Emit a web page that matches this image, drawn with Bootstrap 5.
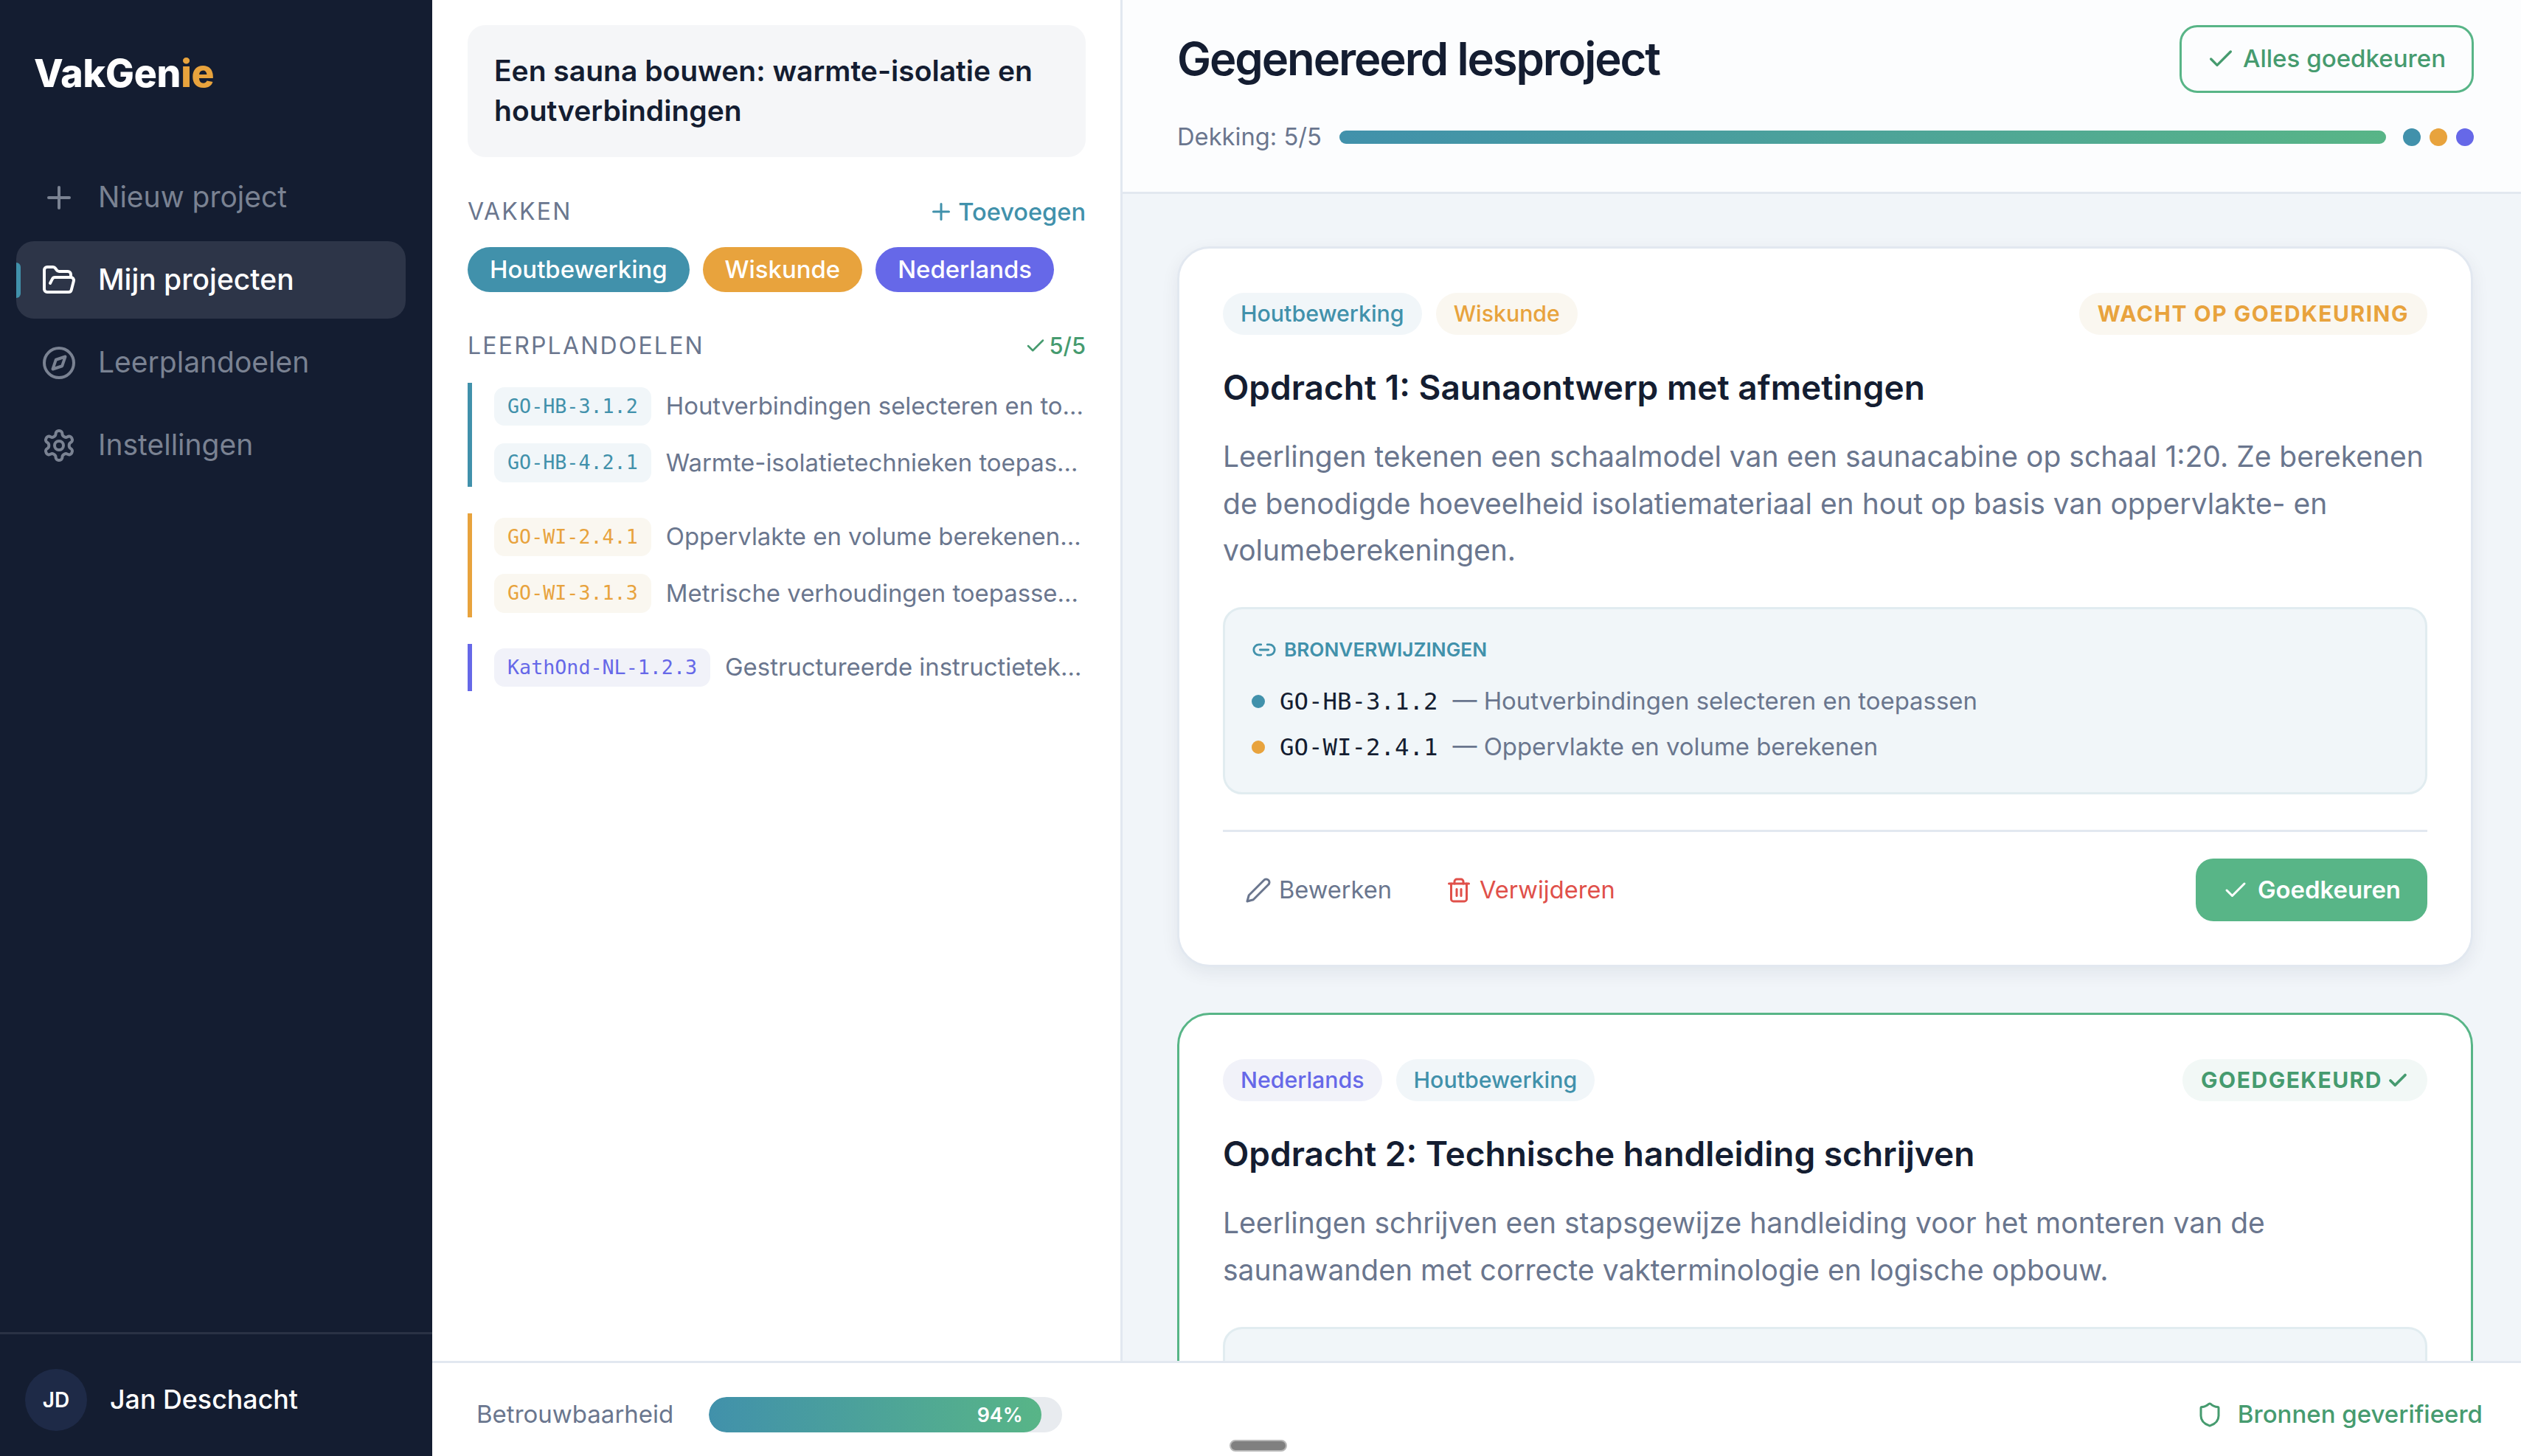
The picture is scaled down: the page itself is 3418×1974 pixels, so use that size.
<!DOCTYPE html>
<html lang="nl">
<head>
    <meta charset="UTF-8">
    <meta name="viewport" content="width=device-width, initial-scale=1.0">
    <title>VakGenie - Gegenereerd lesproject</title>
    <link href="https://cdn.jsdelivr.net/npm/bootstrap@5.3.0/dist/css/bootstrap.min.css" rel="stylesheet">
    <script src="https://cdn.jsdelivr.net/npm/bootstrap@5.3.0/dist/js/bootstrap.bundle.min.js"></script>
    <style>
        :root {
            --vg-ink: #141d31;
            --vg-muted: #6a768e;
            --vg-line: #e2e8f0;
            --vg-teal: #4191ab;
            --vg-orange: #e8a33d;
            --vg-purple: #6668e8;
            --vg-green: #58b587;
            --vg-green-dark: #469b6f;
            --vg-teal-soft: #f1f6f9;
            --vg-orange-soft: #faf7f0;
            --vg-purple-soft: #f1f2f9;
            --vg-green-soft: #f2f8f6;
        }
        body { font-family: "Inter", "Liberation Sans", sans-serif; color: var(--vg-ink); background: #fff; }
        .vg-mono { font-family: "DejaVu Sans Mono", monospace; }
        .vg-ico { fill: none; stroke: currentColor; stroke-width: 2; stroke-linecap: round; stroke-linejoin: round; flex-shrink: 0; }
        .vg-ico-bold { stroke-width: 3; }

        /* sidebar */
        .vg-side { width: 586px; background: #141d31; flex-shrink: 0; }
        .vg-logo { font-size: 51.7px; font-weight: 800; letter-spacing: -.2px; line-height: 62px; color: #fff; padding: 68px 0 0 46px; }
        .vg-logo span { color: var(--vg-orange); }
        .vg-menu { margin-top: 85px; padding: 0 36px 0 22px; gap: 7px; }
        .vg-menu a { height: 105px; padding: 0 0 0 34px; gap: 29px; font-size: 39px; font-weight: 400; color: #7a8292; border-radius: 24px; }
        .vg-menu a.active { background: #2d3548; color: #fff; font-weight: 500; }
        .vg-menu a.active::before { content: ""; position: absolute; left: 0; top: 29px; width: 6px; height: 48px; background: var(--vg-teal); border-radius: 0 6px 6px 0; }
        .vg-user { height: 168px; border-top: 3px solid #2a3245; padding: 12px 0 0 34px; gap: 31px; color: #fff; font-size: 35.8px; font-weight: 500; }
        .vg-avatar { width: 84px; height: 84px; background: #1e2a47; font-size: 28px; font-weight: 600; }

        /* middle column */
        .vg-left { width: 936px; flex-shrink: 0; padding: 34px 47px 0 48px; border-right: 3px solid var(--vg-line); }
        .vg-project { background: #f5f6f8; border-radius: 24px; padding: 35px 36px 36px; font-size: 39px; font-weight: 600; line-height: 54px; }
        .vg-label { font-size: 32px; font-weight: 400; letter-spacing: 2.2px; color: var(--vg-muted); }
        .vg-label-row { margin-top: 54px; height: 40px; }
        .vg-label-row.vg-second { margin-top: 53px; }
        .vg-add { gap: 5px; font-size: 32.6px; font-weight: 500; color: var(--vg-teal); }
        .vg-count { gap: 4px; font-size: 30.8px; font-weight: 500; color: var(--vg-green-dark); }
        .vg-pills { margin-top: 28px; gap: 18px; }
        .vg-pill { height: 61px; padding: 0 30px; font-size: 32.9px; font-weight: 500; color: #fff; }
        .vg-goals { margin-top: 30px; gap: 36px; }
        .vg-goal { border-left: 6px solid; padding: 6px 0 6px 30px; gap: 24px; }
        .vg-goal-row { gap: 20px; height: 52px; min-width: 0; }
        .vg-goal-row + .vg-goal-row { height: 53px; }
        .vg-chip { padding: 0 18px; height: 100%; border-radius: 14px; font-size: 26.7px; flex-shrink: 0; }
        .vg-goal-text { font-size: 32.9px; color: var(--vg-muted); }
        .vg-tone-teal { color: var(--vg-teal); border-color: var(--vg-teal); }
        .vg-tone-orange { color: var(--vg-orange); border-color: var(--vg-orange); }
        .vg-tone-purple { color: var(--vg-purple); border-color: var(--vg-purple); }
        .vg-fill-teal { background: var(--vg-teal); }
        .vg-fill-orange { background: var(--vg-orange); }
        .vg-fill-purple { background: var(--vg-purple); }
        .vg-soft-teal { background: var(--vg-teal-soft); color: var(--vg-teal); }
        .vg-soft-orange { background: var(--vg-orange-soft); color: var(--vg-orange); }
        .vg-soft-purple { background: var(--vg-purple-soft); color: var(--vg-purple); }
        .vg-soft-green { background: var(--vg-green-soft); color: var(--vg-green-dark); }

        /* main column */
        .vg-main { background: #f1f5f9; min-width: 0; }
        .vg-head { background: #fcfdfe; padding: 34px 64px 54px 74px; border-bottom: 3px solid var(--vg-line); flex-shrink: 0; }
        .vg-head h1 { font-size: 61.6px; font-weight: 600; letter-spacing: -2.1px; margin: 0; }
        .btn.vg-approve-all { height: 92px; width: 399px; padding: 0 0 0 33px; gap: 10px; border: 3px solid var(--vg-green); border-radius: 24px; color: var(--vg-green-dark); background: transparent; font-size: 33.1px; font-weight: 500; }
        .vg-cover { margin-top: 40px; height: 40px; gap: 24px; font-size: 32.7px; color: var(--vg-muted); }
        .vg-track { height: 18px; border-radius: 9px; background: #e8ebef; }
        .vg-grad { background: linear-gradient(90deg, var(--vg-teal), var(--vg-green)); }
        .vg-dots { gap: 12px; margin-left: -1px; }
        .vg-dots i { width: 24px; height: 24px; }
        .vg-cards { padding: 71px 65px 0 74px; gap: 62px; min-height: 0; }
        .vg-task { flex-shrink: 0; border: 3px solid var(--vg-line); border-radius: 44px; padding: 60px 59px 59px; box-shadow: 0 8px 24px rgba(20, 30, 50, .07); }
        .vg-task.vg-done { border-color: var(--vg-green); box-shadow: none; }
        .vg-tags { height: 57px; gap: 19px; }
        .vg-tag { height: 57px; padding: 0 24px; font-size: 30.3px; font-weight: 500; }
        .vg-status { height: 57px; padding: 0 25px; gap: 6px; font-size: 30px; font-weight: 700; letter-spacing: 1.5px; }
        .vg-task h2 { font-size: 46px; font-weight: 600; line-height: 56px; margin: 43px 0 0; }
        .vg-desc { font-size: 39px; line-height: 63.7px; color: var(--vg-muted); margin: 34px 0 0; }
        .vg-refs { margin-top: 45px; background: var(--vg-teal-soft); border: 3px solid #e1ecf0; border-radius: 26px; padding: 37px 36px 39px; }
        .vg-refs-title { height: 36px; gap: 10px; margin-bottom: 30px; font-size: 26.2px; font-weight: 600; color: var(--vg-teal); }
        .vg-ref { height: 44px; gap: 20px; font-size: 32.9px; color: var(--vg-muted); }
        .vg-ref + .vg-ref { margin-top: 18px; }
        .vg-ref i { width: 18px; height: 18px; }
        .vg-ref b { font-size: 32.4px; font-weight: 400; color: var(--vg-ink); margin-right: 20px; }
        .vg-actions { margin-top: 48px; padding-top: 36px; border-top: 3px solid var(--vg-line); }
        .btn.vg-link { padding: 0 29px 0 30px; gap: 10px; border: 0; font-size: 32.6px; font-weight: 400; }
        .btn.vg-edit { color: var(--vg-muted); }
        .btn.vg-del { color: #e0504a; margin-left: 14px; }
        .btn.vg-approve { height: 85px; padding: 0 36px; gap: 12px; border: 0; border-radius: 24px; background: var(--vg-green); color: #fff; font-size: 32.9px; font-weight: 600; }

        /* footer bar */
        .vg-foot { height: 129px; flex-shrink: 0; background: #fff; border-top: 3px solid var(--vg-line); padding: 14px 52px 0 60px; font-size: 33px; }
        .vg-trust { gap: 48px; color: var(--vg-muted); }
        .progress.vg-trust-bar { width: 479px; height: 48px; border-radius: 24px; background: #e8ebef; }
        .vg-trust-bar .progress-bar { border-radius: 24px; align-items: flex-end; padding-right: 25px; font-size: 26.8px; font-weight: 600; color: #fff; }
        .vg-verified { gap: 20px; font-weight: 500; color: var(--vg-green-dark); }
        .vg-handle { left: 1081px; top: 104px; width: 78px; height: 16px; border-radius: 8px; background: #808080; border: 2px solid #b8b8b8; }
    </style>
</head>
<body class="d-flex vh-100 overflow-hidden">

    <svg width="0" height="0" class="position-absolute">
        <symbol id="i-plus" viewBox="0 0 24 24"><path d="M5 12h14"/><path d="M12 5v14"/></symbol>
        <symbol id="i-folder" viewBox="0 0 24 24"><path d="m6 14 1.5-2.9A2 2 0 0 1 9.24 10H20a2 2 0 0 1 1.94 2.5l-1.54 6a2 2 0 0 1-1.95 1.5H4a2 2 0 0 1-2-2V5a2 2 0 0 1 2-2h3.9a2 2 0 0 1 1.69.9l.81 1.2a2 2 0 0 0 1.67.9H18a2 2 0 0 1 2 2v2"/></symbol>
        <symbol id="i-compass" viewBox="0 0 24 24"><circle cx="12" cy="12" r="10"/><path d="m16.24 7.76-2.12 6.36-6.36 2.12 2.12-6.36 6.36-2.12z"/></symbol>
        <symbol id="i-gear" viewBox="0 0 24 24"><path d="M12.22 2h-.44a2 2 0 0 0-2 2v.18a2 2 0 0 1-1 1.73l-.43.25a2 2 0 0 1-2 0l-.15-.08a2 2 0 0 0-2.73.73l-.22.38a2 2 0 0 0 .73 2.73l.15.1a2 2 0 0 1 1 1.72v.51a2 2 0 0 1-1 1.74l-.15.09a2 2 0 0 0-.73 2.73l.22.38a2 2 0 0 0 2.73.73l.15-.08a2 2 0 0 1 2 0l.43.25a2 2 0 0 1 1 1.73V20a2 2 0 0 0 2 2h.44a2 2 0 0 0 2-2v-.18a2 2 0 0 1 1-1.73l.43-.25a2 2 0 0 1 2 0l.15.08a2 2 0 0 0 2.73-.73l.22-.39a2 2 0 0 0-.73-2.73l-.15-.08a2 2 0 0 1-1-1.74v-.5a2 2 0 0 1 1-1.74l.15-.09a2 2 0 0 0 .73-2.73l-.22-.38a2 2 0 0 0-2.73-.73l-.15.08a2 2 0 0 1-2 0l-.43-.25a2 2 0 0 1-1-1.73V4a2 2 0 0 0-2-2z"/><circle cx="12" cy="12" r="3"/></symbol>
        <symbol id="i-check" viewBox="0 0 24 24"><path d="M20 6 9 17l-5-5"/></symbol>
        <symbol id="i-link" viewBox="0 0 24 24"><path d="M9 17H7A5 5 0 0 1 7 7h2"/><path d="M15 7h2a5 5 0 1 1 0 10h-2"/><path d="M8 12h8"/></symbol>
        <symbol id="i-pencil" viewBox="0 0 24 24"><path d="M17 3a2.85 2.83 0 1 1 4 4L7.5 20.5 2 22l1.5-5.5Z"/></symbol>
        <symbol id="i-trash" viewBox="0 0 24 24"><path d="M3 6h18"/><path d="M19 6v14c0 1-1 2-2 2H7c-1 0-2-1-2-2V6"/><path d="M8 6V4c0-1 1-2 2-2h4c1 0 2 1 2 2v2"/><path d="M10 11v6"/><path d="M14 11v6"/></symbol>
        <symbol id="i-shield" viewBox="0 0 24 24"><path d="M20 13c0 5-3.5 7.5-7.66 8.95a1 1 0 0 1-.67-.01C7.5 20.5 4 18 4 13V6a1 1 0 0 1 1-1c2 0 4.5-1.2 6.24-2.72a1.17 1.17 0 0 1 1.52 0C14.51 3.81 17 5 19 5a1 1 0 0 1 1 1z"/></symbol>
    </svg>

    <aside class="vg-side d-flex flex-column">
        <div class="vg-logo">VakGen<span>ie</span></div>
        <nav class="nav flex-column vg-menu">
            <a class="nav-link d-flex align-items-center" href="#"><svg class="vg-ico" width="48" height="48"><use href="#i-plus"/></svg>Nieuw project</a>
            <a class="nav-link d-flex align-items-center active position-relative" href="#"><svg class="vg-ico" width="48" height="48"><use href="#i-folder"/></svg>Mijn projecten</a>
            <a class="nav-link d-flex align-items-center" href="#"><svg class="vg-ico" width="48" height="48"><use href="#i-compass"/></svg>Leerplandoelen</a>
            <a class="nav-link d-flex align-items-center" href="#"><svg class="vg-ico" width="48" height="48"><use href="#i-gear"/></svg>Instellingen</a>
        </nav>
        <div class="vg-user mt-auto d-flex align-items-center">
            <div class="vg-avatar rounded-circle d-flex align-items-center justify-content-center">JD</div>
            <span>Jan Deschacht</span>
        </div>
    </aside>

    <div class="flex-grow-1 d-flex flex-column overflow-hidden">
        <div class="flex-grow-1 d-flex overflow-hidden">

            <section class="vg-left">
                <div class="vg-project">Een sauna bouwen: warmte-isolatie en houtverbindingen</div>

                <div class="vg-label-row d-flex justify-content-between align-items-center">
                    <span class="vg-label">VAKKEN</span>
                    <a class="vg-add d-flex align-items-center text-decoration-none" href="#"><svg class="vg-ico" width="36" height="36"><use href="#i-plus"/></svg>Toevoegen</a>
                </div>
                <div class="vg-pills d-flex">
                    <span class="vg-pill vg-fill-teal rounded-pill d-flex align-items-center">Houtbewerking</span>
                    <span class="vg-pill vg-fill-orange rounded-pill d-flex align-items-center">Wiskunde</span>
                    <span class="vg-pill vg-fill-purple rounded-pill d-flex align-items-center">Nederlands</span>
                </div>

                <div class="vg-label-row vg-second d-flex justify-content-between align-items-center">
                    <span class="vg-label">LEERPLANDOELEN</span>
                    <span class="vg-count d-flex align-items-center"><svg class="vg-ico" width="30" height="30"><use href="#i-check"/></svg>5/5</span>
                </div>
                <div class="vg-goals d-flex flex-column">
                    <div class="vg-goal vg-tone-teal d-flex flex-column">
                        <div class="vg-goal-row d-flex align-items-center">
                            <span class="vg-chip vg-soft-teal vg-mono d-flex align-items-center">GO-HB-3.1.2</span>
                            <span class="vg-goal-text text-truncate">Houtverbindingen selecteren en toepassen</span>
                        </div>
                        <div class="vg-goal-row d-flex align-items-center">
                            <span class="vg-chip vg-soft-teal vg-mono d-flex align-items-center">GO-HB-4.2.1</span>
                            <span class="vg-goal-text text-truncate">Warmte-isolatietechnieken toepassen</span>
                        </div>
                    </div>
                    <div class="vg-goal vg-tone-orange d-flex flex-column">
                        <div class="vg-goal-row d-flex align-items-center">
                            <span class="vg-chip vg-soft-orange vg-mono d-flex align-items-center">GO-WI-2.4.1</span>
                            <span class="vg-goal-text text-truncate">Oppervlakte en volume berekenen van ruimtes</span>
                        </div>
                        <div class="vg-goal-row d-flex align-items-center">
                            <span class="vg-chip vg-soft-orange vg-mono d-flex align-items-center">GO-WI-3.1.3</span>
                            <span class="vg-goal-text text-truncate">Metrische verhoudingen toepassen in een plan</span>
                        </div>
                    </div>
                    <div class="vg-goal vg-tone-purple d-flex flex-column">
                        <div class="vg-goal-row d-flex align-items-center">
                            <span class="vg-chip vg-soft-purple vg-mono d-flex align-items-center">KathOnd-NL-1.2.3</span>
                            <span class="vg-goal-text text-truncate">Gestructureerde instructieteksten schrijven</span>
                        </div>
                    </div>
                </div>
            </section>

            <main class="vg-main flex-grow-1 d-flex flex-column overflow-hidden">
                <header class="vg-head">
                    <div class="d-flex justify-content-between align-items-center">
                        <h1>Gegenereerd lesproject</h1>
                        <button class="btn vg-approve-all d-flex align-items-center" type="button"><svg class="vg-ico" width="40" height="40"><use href="#i-check"/></svg>Alles goedkeuren</button>
                    </div>
                    <div class="vg-cover d-flex align-items-center">
                        <span>Dekking: 5/5</span>
                        <div class="progress vg-track flex-grow-1">
                            <div class="progress-bar vg-grad" style="width: 100%"></div>
                        </div>
                        <div class="vg-dots d-flex">
                            <i class="vg-fill-teal rounded-circle"></i>
                            <i class="vg-fill-orange rounded-circle"></i>
                            <i class="vg-fill-purple rounded-circle"></i>
                        </div>
                    </div>
                </header>

                <div class="vg-cards flex-grow-1 d-flex flex-column overflow-hidden">
                    <article class="card vg-task">
                        <div class="d-flex justify-content-between">
                            <div class="vg-tags d-flex">
                                <span class="vg-tag vg-soft-teal rounded-pill d-flex align-items-center">Houtbewerking</span>
                                <span class="vg-tag vg-soft-orange rounded-pill d-flex align-items-center">Wiskunde</span>
                            </div>
                            <span class="vg-status vg-soft-orange rounded-pill d-flex align-items-center">WACHT OP GOEDKEURING</span>
                        </div>
                        <h2>Opdracht 1: Saunaontwerp met afmetingen</h2>
                        <p class="vg-desc">Leerlingen tekenen een schaalmodel van een saunacabine op schaal 1:20. Ze berekenen de benodigde hoeveelheid isolatiemateriaal en hout op basis van oppervlakte- en volumeberekeningen.</p>
                        <div class="vg-refs">
                            <div class="vg-refs-title d-flex align-items-center"><svg class="vg-ico" width="34" height="34"><use href="#i-link"/></svg>BRONVERWIJZINGEN</div>
                            <div class="vg-ref d-flex align-items-center"><i class="vg-fill-teal rounded-circle"></i><span><b class="vg-mono">GO-HB-3.1.2</b>— Houtverbindingen selecteren en toepassen</span></div>
                            <div class="vg-ref d-flex align-items-center"><i class="vg-fill-orange rounded-circle"></i><span><b class="vg-mono">GO-WI-2.4.1</b>— Oppervlakte en volume berekenen</span></div>
                        </div>
                        <div class="vg-actions d-flex align-items-center">
                            <button class="btn vg-link vg-edit d-flex align-items-center" type="button"><svg class="vg-ico" width="36" height="36"><use href="#i-pencil"/></svg>Bewerken</button>
                            <button class="btn vg-link vg-del d-flex align-items-center" type="button"><svg class="vg-ico" width="36" height="36"><use href="#i-trash"/></svg>Verwijderen</button>
                            <button class="btn vg-approve ms-auto d-flex align-items-center" type="button"><svg class="vg-ico" width="36" height="36"><use href="#i-check"/></svg>Goedkeuren</button>
                        </div>
                    </article>

                    <article class="card vg-task vg-done">
                        <div class="d-flex justify-content-between">
                            <div class="vg-tags d-flex">
                                <span class="vg-tag vg-soft-purple rounded-pill d-flex align-items-center">Nederlands</span>
                                <span class="vg-tag vg-soft-teal rounded-pill d-flex align-items-center">Houtbewerking</span>
                            </div>
                            <span class="vg-status vg-soft-green rounded-pill d-flex align-items-center">GOEDGEKEURD<svg class="vg-ico vg-ico-bold" width="30" height="30"><use href="#i-check"/></svg></span>
                        </div>
                        <h2>Opdracht 2: Technische handleiding schrijven</h2>
                        <p class="vg-desc">Leerlingen schrijven een stapsgewijze handleiding voor het monteren van de saunawanden met correcte vakterminologie en logische opbouw.</p>
                        <div class="vg-refs">
                            <div class="vg-refs-title d-flex align-items-center"><svg class="vg-ico" width="34" height="34"><use href="#i-link"/></svg>BRONVERWIJZINGEN</div>
                        </div>
                    </article>
                </div>
            </main>
        </div>

        <footer class="vg-foot position-relative d-flex justify-content-between align-items-center">
            <div class="vg-trust d-flex align-items-center">
                <span>Betrouwbaarheid</span>
                <div class="progress vg-trust-bar">
                    <div class="progress-bar vg-grad" style="width: 94%">94%</div>
                </div>
            </div>
            <div class="vg-verified d-flex align-items-center"><svg class="vg-ico" width="36" height="36"><use href="#i-shield"/></svg>Bronnen geverifieerd</div>
            <div class="vg-handle position-absolute"></div>
        </footer>
    </div>
</body>
</html>
